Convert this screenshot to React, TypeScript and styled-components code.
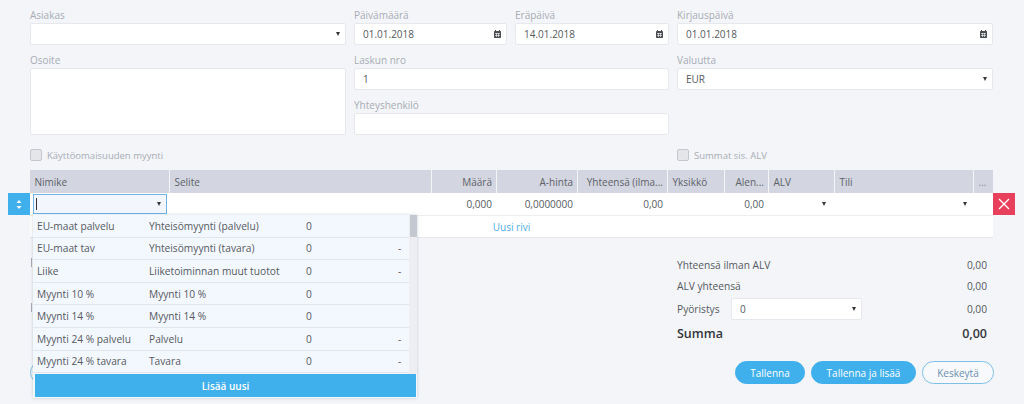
import React from "react";
import styled, { createGlobalStyle } from "styled-components";

const GlobalStyle = createGlobalStyle`
    html, body {
        margin: 0;
        padding: 0;
        background: #f3f5f9;
        font-family: "Open Sans", "Liberation Sans", sans-serif;
        font-size: 10px;
        color: #555a60;
        overflow: hidden;
    }
`;

const COLUMNS = "140px 262px 65px 81px 90px 57px 44px 66px 139px 19px";

const Page = styled.div`
    position: relative;
    width: 963px;
    height: 404px;
    padding: 0 31px 0 30px;
    box-sizing: content-box;
`;

const FormGrid = styled.div`
    display: grid;
    grid-template-columns: 316px 153px 154px 316px;
    column-gap: 8px;
    padding-top: 8px;
`;

const Field = styled.div<{ $rows?: number; $col?: number; $span?: number }>`
    display: flex;
    flex-direction: column;
    grid-column: ${(p) => p.$col ?? "auto"} / span ${(p) => p.$span ?? 1};
    grid-row: span ${(p) => p.$rows ?? 1};
    margin-bottom: 8px;
`;

const Label = styled.label`
    height: 15px;
    line-height: 14px;
    font-size: 10px;
    color: #a8acb4;
    white-space: nowrap;
`;

const Input = styled.div<{ $grow?: boolean }>`
    display: flex;
    align-items: center;
    justify-content: space-between;
    box-sizing: border-box;
    height: 22px;
    flex: ${(p) => (p.$grow ? 1 : "none")};
    padding: 0 5px 0 8px;
    background: #fff;
    border: 1px solid #e6e8ed;
    border-radius: 2px;
    font-size: 10px;
    color: #555a60;
`;

const Caret = styled.span`
    display: inline-block;
    width: 0;
    height: 0;
    border-left: 2.5px solid transparent;
    border-right: 2.5px solid transparent;
    border-top: 4px solid #33363b;
`;

const CheckRow = styled.div`
    display: grid;
    grid-template-columns: 647px 316px;
    height: 22px;
    margin-top: 1px;
    margin-bottom: 4px;
`;

const Check = styled.div`
    display: flex;
    align-items: center;
    gap: 5px;
    font-size: 9.5px;
    color: #a8acb4;
`;

const CheckBox = styled.span`
    box-sizing: border-box;
    width: 12px;
    height: 12px;
    background: #e4e6ea;
    border: 1px solid #c4c7cd;
    border-radius: 2px;
`;

const TableHead = styled.div`
    display: grid;
    grid-template-columns: ${COLUMNS};
    height: 23px;
    background: #d3d6e0;
`;

const HeadCell = styled.div<{ $right?: boolean }>`
    display: flex;
    align-items: center;
    justify-content: ${(p) => (p.$right ? "flex-end" : "flex-start")};
    padding: 0 4px 0 4.5px;
    border-right: 1px solid #f3f5f9;
    font-size: 10px;
    color: #5d6169;
    white-space: nowrap;
    overflow: hidden;

    &:last-child {
        border-right: none;
        color: #8b8f98;
    }
`;

const LineRow = styled.div`
    display: flex;
    height: 22px;
    margin: 0 -22px;
`;

const SortHandle = styled.div`
    display: flex;
    align-items: center;
    justify-content: center;
    width: 22px;
    background: #3fb0ec;
`;

const DeleteButton = styled.div`
    display: flex;
    align-items: center;
    justify-content: center;
    width: 22px;
    background: #e8405c;
`;

const LineCells = styled.div`
    display: grid;
    flex: 1;
    grid-template-columns: ${COLUMNS};
    background: #fff;
`;

const LineCell = styled.div<{ $right?: boolean; $pad?: number }>`
    display: flex;
    align-items: center;
    justify-content: ${(p) => (p.$right ? "flex-end" : "flex-start")};
    padding: 0 ${(p) => p.$pad ?? 5}px 0 5px;
    font-size: 10px;
    color: #555a60;
`;

const ItemSelect = styled.div`
    display: flex;
    align-items: center;
    justify-content: space-between;
    box-sizing: border-box;
    width: 134px;
    height: 20px;
    margin: 1px 0 0 3px;
    padding: 0 5px 0 2px;
    background: #f3f7fd;
    border: 1px solid #6fb4e8;
`;

const TextCursor = styled.span`
    width: 1px;
    height: 12px;
    background: #33363b;
`;

const AddRow = styled.div`
    display: flex;
    align-items: center;
    justify-content: center;
    height: 23px;
    background: #fff;
    border-top: 1px solid #eceef2;
    border-bottom: 1px solid #e6e8ed;
    box-sizing: border-box;
    font-size: 10px;
    color: #4bade2;
`;

const Bottom = styled.div`
    display: grid;
    grid-template-columns: 316px 331px 316px;
    padding-top: 16.5px;
`;

const NotesColumn = styled.div`
    display: flex;
    flex-direction: column;
    align-items: flex-start;
    grid-column: 1;
    padding: 3.5px 0 0 1px;
`;

/* only the first stroke of these labels shows beside the open list */
const LabelStroke = styled.span`
    width: 1px;
    height: 9px;
    margin-bottom: 36px;
    background: #a8acb4;
`;

const Totals = styled.div`
    grid-column: 3;
    display: flex;
    flex-direction: column;
`;

const TotalRow = styled.div<{ $height: number; $strong?: boolean }>`
    display: flex;
    align-items: center;
    justify-content: space-between;
    height: ${(p) => p.$height}px;
    padding-right: 6px;
    font-size: ${(p) => (p.$strong ? 12.5 : 10.2)}px;
    font-weight: ${(p) => (p.$strong ? 600 : 400)};
    color: ${(p) => (p.$strong ? "#33363b" : "#555a60")};
`;

const RoundingLeft = styled.div`
    display: flex;
    align-items: center;
`;

const RoundingLabel = styled.span`
    width: 54px;
`;

const RoundingSelect = styled(Input)`
    width: 131px;
`;

const Actions = styled.div`
    display: flex;
    justify-content: flex-end;
    gap: 6px;
    margin-top: 16.5px;
    margin-right: -1px;
`;

const Pill = styled.button<{ $ghost?: boolean; $width: number }>`
    box-sizing: border-box;
    width: ${(p) => p.$width}px;
    height: 23px;
    padding: 0;
    border-radius: 12px;
    border: 1px solid ${(p) => (p.$ghost ? "#7fc0e8" : "#3fb0ec")};
    background: ${(p) => (p.$ghost ? "#f7f9fc" : "#3fb0ec")};
    color: ${(p) => (p.$ghost ? "#6b8fae" : "#fff")};
    font-family: inherit;
    font-size: 10px;
`;

const LeftPill = styled(Pill)`
    margin-top: auto;
    margin-left: -1px;
    background: transparent;
`;

const Popup = styled.div`
    position: absolute;
    left: 33px;
    top: 215px;
    width: 384px;
    height: 183px;
    background: #f3f7fe;
    box-shadow: 0 0 3px rgba(60, 70, 90, 0.25);
`;

const PopupRows = styled.div`
    height: 159px;
    overflow: hidden;
`;

const PopupRow = styled.div`
    display: grid;
    grid-template-columns: 112px 157px 1fr 8px;
    align-items: center;
    box-sizing: border-box;
    height: 22.6px;
    margin-right: 7px;
    padding: 0 4px;
    border-bottom: 1px solid #e2e5eb;
    font-size: 10.2px;
    color: #555a60;
    white-space: nowrap;
`;

const ScrollThumb = styled.div`
    position: absolute;
    right: 0;
    top: 0;
    width: 7px;
    height: 22px;
    background: #c4c8d0;
`;

const ScrollTrack = styled.div`
    position: absolute;
    right: 0;
    top: 0;
    width: 8px;
    height: 159px;
    background: #eceef2;
`;

const AddNew = styled.div`
    display: flex;
    align-items: center;
    justify-content: center;
    height: 23px;
    margin: 0 1px 0 2px;
    background: #3fb0ec;
    color: #fff;
    font-size: 10px;
    font-weight: 600;
`;

const CalendarIcon = () => (
    <svg width="7" height="8" viewBox="0 0 7 8">
        <path d="M1.5 0v1M5.5 0v1" stroke="#4a4d52" strokeWidth="1" />
        <rect x="0" y="1" width="7" height="7" rx="0.8" fill="#4a4d52" />
        <path d="M1 3.5h5M1 5.5h5M2.5 3v4M4.5 3v4" stroke="#fff" strokeWidth="0.6" />
    </svg>
);

const SortIcon = () => (
    <svg width="6" height="9" viewBox="0 0 6 9">
        <path d="M3 0l2.5 3h-5zM3 9L.5 6h5z" fill="#fff" />
    </svg>
);

const CloseIcon = () => (
    <svg width="12" height="12" viewBox="0 0 12 12">
        <path d="M1 1l10 10M11 1L1 11" stroke="#fff" strokeWidth="1.4" />
    </svg>
);

const headers: [string, boolean][] = [
    ["Nimike", false],
    ["Selite", false],
    ["Määrä", true],
    ["A-hinta", true],
    ["Yhteensä (ilma...", true],
    ["Yksikkö", false],
    ["Alen...", true],
    ["ALV", false],
    ["Tili", false],
    ["...", false],
];

const products = [
    ["EU-maat palvelu", "Yhteisömyynti (palvelu)", "0", ""],
    ["EU-maat tav", "Yhteisömyynti (tavara)", "0", "-"],
    ["Liike", "Liiketoiminnan muut tuotot", "0", "-"],
    ["Myynti 10 %", "Myynti 10 %", "0", ""],
    ["Myynti 14 %", "Myynti 14 %", "0", ""],
    ["Myynti 24 % palvelu", "Palvelu", "0", "-"],
    ["Myynti 24 % tavara", "Tavara", "0", "-"],
];

export default function App() {
    return (
        <Page>
            <GlobalStyle />
            <FormGrid>
                <Field>
                    <Label>Asiakas</Label>
                    <Input>
                        <span />
                        <Caret />
                    </Input>
                </Field>
                <Field>
                    <Label>Päivämäärä</Label>
                    <Input>
                        01.01.2018
                        <CalendarIcon />
                    </Input>
                </Field>
                <Field>
                    <Label>Eräpäivä</Label>
                    <Input>
                        14.01.2018
                        <CalendarIcon />
                    </Input>
                </Field>
                <Field>
                    <Label>Kirjauspäivä</Label>
                    <Input>
                        01.01.2018
                        <CalendarIcon />
                    </Input>
                </Field>
                <Field $rows={2} $col={1}>
                    <Label>Osoite</Label>
                    <Input $grow />
                </Field>
                <Field $span={2}>
                    <Label>Laskun nro</Label>
                    <Input>1</Input>
                </Field>
                <Field>
                    <Label>Valuutta</Label>
                    <Input>
                        EUR
                        <Caret />
                    </Input>
                </Field>
                <Field $col={2} $span={2}>
                    <Label>Yhteyshenkilö</Label>
                    <Input />
                </Field>
            </FormGrid>
            <CheckRow>
                <Check>
                    <CheckBox />
                    Käyttöomaisuuden myynti
                </Check>
                <Check>
                    <CheckBox />
                    Summat sis. ALV
                </Check>
            </CheckRow>
            <TableHead>
                {headers.map(([title, right]) => (
                    <HeadCell key={title} $right={right}>
                        {title}
                    </HeadCell>
                ))}
            </TableHead>
            <LineRow>
                <SortHandle>
                    <SortIcon />
                </SortHandle>
                <LineCells>
                    <ItemSelect>
                        <TextCursor />
                        <Caret />
                    </ItemSelect>
                    <LineCell />
                    <LineCell $right>0,000</LineCell>
                    <LineCell $right>0,0000000</LineCell>
                    <LineCell $right>0,00</LineCell>
                    <LineCell />
                    <LineCell $right>0,00</LineCell>
                    <LineCell $right $pad={9}>
                        <Caret />
                    </LineCell>
                    <LineCell $right $pad={7.5}>
                        <Caret />
                    </LineCell>
                    <LineCell />
                </LineCells>
                <DeleteButton>
                    <CloseIcon />
                </DeleteButton>
            </LineRow>
            <AddRow>Uusi rivi</AddRow>
            <Bottom>
                <NotesColumn>
                    <LabelStroke />
                    <LabelStroke />
                    <LeftPill $ghost $width={90} />
                </NotesColumn>
                <Totals>
                    <TotalRow $height={21}>
                        <span>Yhteensä ilman ALV</span>
                        <span>0,00</span>
                    </TotalRow>
                    <TotalRow $height={21}>
                        <span>ALV yhteensä</span>
                        <span>0,00</span>
                    </TotalRow>
                    <TotalRow $height={25}>
                        <RoundingLeft>
                            <RoundingLabel>Pyöristys</RoundingLabel>
                            <RoundingSelect>
                                0
                                <Caret />
                            </RoundingSelect>
                        </RoundingLeft>
                        <span>0,00</span>
                    </TotalRow>
                    <TotalRow $height={23} $strong>
                        <span>Summa</span>
                        <span>0,00</span>
                    </TotalRow>
                    <Actions>
                        <Pill $width={70}>Tallenna</Pill>
                        <Pill $width={105}>Tallenna ja lisää</Pill>
                        <Pill $ghost $width={72}>
                            Keskeytä
                        </Pill>
                    </Actions>
                </Totals>
            </Bottom>
            <Popup>
                <PopupRows>
                    {products.map((row) => (
                        <PopupRow key={row[0]}>
                            {row.map((value, i) => (
                                <span key={i}>{value}</span>
                            ))}
                        </PopupRow>
                    ))}
                </PopupRows>
                <ScrollTrack />
                <ScrollThumb />
                <AddNew>Lisää uusi</AddNew>
            </Popup>
        </Page>
    );
}
